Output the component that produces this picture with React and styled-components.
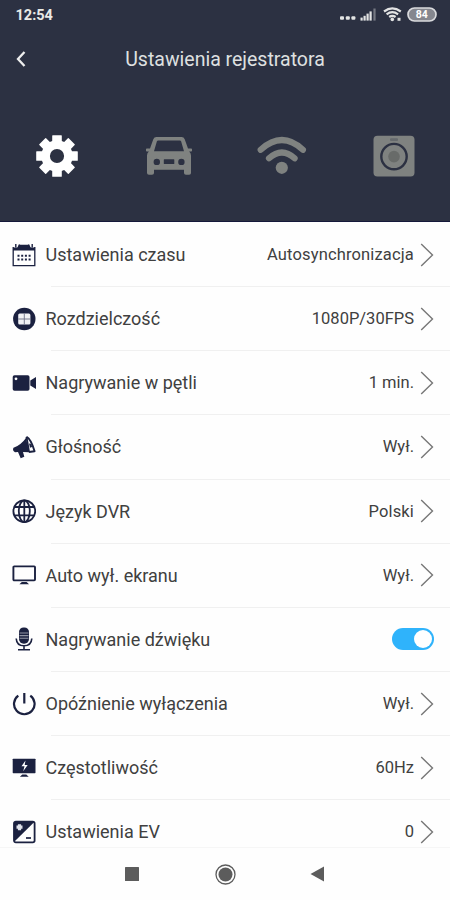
import React, { useState } from "react";
import styled, { createGlobalStyle } from "styled-components";

const Colors = {
  Navy: "#2c3142",
  Ink: "#1b2140",
  Muted: "#7f8280",
  Text: "#404040",
  Line: "#f0f0f0",
  Switch: "#2fb3fb",
  Nav: "#5c5c5c",
};

const GlobalStyle = createGlobalStyle`
  * {
    box-sizing: border-box;
  }
  body {
    margin: 0;
    background: #fefefe;
    font-family: Roboto, "Liberation Sans", sans-serif;
  }
`;

const Screen = styled.div`
  display: flex;
  flex-direction: column;
  width: 450px;
  height: 900px;
  overflow: hidden;
`;

const Header = styled.header`
  flex: none;
  height: 222px;
  background: ${Colors.Navy};
  border-bottom: 1px solid #15183a;
`;

const StatusBar = styled.div`
  display: flex;
  justify-content: space-between;
  align-items: center;
  height: 30px;
  padding: 0 13px 0 15.5px;
`;

const Clock = styled.span`
  font-size: 14.5px;
  font-weight: 700;
  color: #e9eae6;
`;

const TitleBar = styled.div`
  display: grid;
  grid-template-columns: 60px 1fr 60px;
  align-items: center;
  height: 58px;
`;

const BackButton = styled.button`
  display: flex;
  padding: 0 0 0 16px;
  border: 0;
  background: none;
`;

const Title = styled.h1`
  margin: 0;
  font-size: 19.5px;
  font-weight: 400;
  text-align: center;
  white-space: nowrap;
  color: #dfe0e0;
`;

const Tabs = styled.nav`
  display: grid;
  grid-template-columns: repeat(4, 112.5px);
  height: 136px;
`;

const Tab = styled.button`
  display: flex;
  align-items: center;
  justify-content: center;
  padding: 0 0 0 1px;
  border: 0;
  background: none;
  color: ${(props) => (props.$active ? "#ffffff" : Colors.Muted)};
`;

const List = styled.main`
  flex: 1;
  min-height: 0;
  padding-top: 0.5px;
  overflow: hidden;
`;

const StyledRow = styled.div`
  display: flex;
  height: 64.15px;
`;

const RowIcon = styled.div`
  display: flex;
  align-items: center;
  justify-content: center;
  flex: none;
  width: 24px;
  margin: 0 9.5px 0 12px;
`;

const Label = styled.span`
  display: flex;
  align-items: center;
  font-size: 18px;
  white-space: nowrap;
  color: ${Colors.Text};
`;

const Value = styled.span`
  display: flex;
  align-items: center;
  gap: 6px;
  margin-left: auto;
  padding-right: 16px;
  font-size: 16.5px;
  letter-spacing: ${(props) => props.$spacing || 0}px;
  white-space: nowrap;
  color: ${Colors.Text};
`;

const Divider = styled.div`
  height: 1px;
  margin: -0.5px 0 -0.5px 51px;
  background: ${Colors.Line};
`;

const Switch = styled.button`
  display: flex;
  justify-content: ${(props) => (props.$on ? "flex-end" : "flex-start")};
  width: 42px;
  height: 22px;
  padding: 2px;
  border: 0;
  border-radius: 11px;
  background: ${(props) => (props.$on ? Colors.Switch : "#cccccc")};
`;

const Knob = styled.span`
  width: 18px;
  height: 18px;
  border-radius: 50%;
  background: #ffffff;
`;

const NavBar = styled.footer`
  display: flex;
  flex: none;
  align-items: center;
  height: 53px;
  padding-left: 125px;
  border-top: 1px solid #f6f6f6;
  background: #fefefe;
`;

const NavButton = styled.button`
  display: flex;
  padding: 0;
  margin-right: ${(props) => props.$gap || 0}px;
  border: 0;
  background: none;
`;

function StatusIcons() {
  return (
    <svg width="100" height="20" viewBox="337 5 100 20">
      <g fill="#e3e4e4">
        <rect x="340" y="16.2" width="4" height="3.6" rx="1" />
        <rect x="345.8" y="16.2" width="4" height="3.6" rx="1" />
        <rect x="351.4" y="16.2" width="4" height="3.6" rx="1" />
        <rect x="360.5" y="17.6" width="2.2" height="3" />
        <rect x="363.5" y="15.8" width="2.2" height="4.8" />
        <rect x="366.5" y="13.6" width="2.2" height="7" />
        <rect x="369.5" y="11.4" width="2.2" height="9.2" />
        <rect x="373.4" y="8.5" width="2.2" height="12.1" opacity="0.4" />
        <circle cx="392.3" cy="19.4" r="1.8" />
        <rect x="397.5" y="17.8" width="3" height="3" />
      </g>
      <g fill="none" stroke="#e3e4e4" strokeWidth="2.2">
        <path d="M384 11.5q8.3-6.2 16.8 0" />
        <path d="M386.6 14.3q5.7-4.3 11.5 0" />
        <path d="M389.2 17q3.1-2.3 6.4 0" />
      </g>
      <rect x="408" y="8" width="28" height="13" rx="6.5" fill="#85878f" stroke="#d9dadd" strokeWidth="1.7" />
      <text x="421.8" y="18.4" textAnchor="middle" fontSize="10.5" fontWeight="700" fill="#ffffff">84</text>
    </svg>
  );
}

function GearIcon() {
  return (
    <svg width="44" height="44" viewBox="-22 -22 44 44">
      <circle r="11.4" fill="none" stroke="currentColor" strokeWidth="8.6" />
      {[0, 45, 90, 135, 180, 225, 270, 315].map((angle) => (
        <rect key={angle} x="-4.8" y="-20.8" width="9.6" height="9" rx="0.6" fill="currentColor" transform={`rotate(${angle})`} />
      ))}
    </svg>
  );
}

function CarIcon() {
  return (
    <svg width="46" height="40" viewBox="0 0 46 40">
      <path
        fill="currentColor"
        fillRule="evenodd"
        d="M10.5 1h25q2.4 0 3.2 2.3L42 12.5h3.2q.8 0 .8.8v1.5q0 .8-.8.8h-2.1q1.9 1.4 1.9 4V37q0 1.8-1.8 1.8H40q-2 0-2-1.8v-3.2H8V37q0 1.8-2 1.8H3Q1 38.800 1 37V19.600q0-2.600 1.900-4H.8q-.8 0-.8-.8v-1.500q0-.8.8-.8H4L7.300 3.300Q8.100 1 10.500 1Zm1.600 3.400q-.9 0-1.200.9L8 15.300h30L35.100 5.300q-.3-.9-1.200-.9ZM10.800 22.700a3.200 3.200 0 1 0 0 6.400 3.200 3.200 0 0 0 0-6.400Zm24.600 0a3.200 3.200 0 1 0 0 6.400 3.200 3.200 0 0 0 0-6.400ZM18.300 23.300q-.5 0-.5.5v3.600q0 .5.5.5h9.500q.5 0 .5-.5v-3.600q0-.5-.5-.5Z"
      />
    </svg>
  );
}

function WifiIcon() {
  return (
    <svg width="50" height="40" viewBox="257 136 50 40">
      <g fill="none" stroke="currentColor" strokeWidth="6.2" strokeLinecap="round">
        <path d="M260.700 149.800q21.300-19.400 42.200 0" />
        <path d="M269 158.300q12.900-11.600 25.600 0" />
      </g>
      <circle cx="281.800" cy="167.800" r="6.100" fill="currentColor" />
    </svg>
  );
}

function CameraIcon() {
  return (
    <svg width="42" height="42" viewBox="0 0 42 42">
      <rect x="0.500" y="0.800" width="41" height="40.600" rx="4" fill="currentColor" />
      <rect x="17" y="3.200" width="8" height="2.800" rx="1" fill="#666a6d" />
      <circle cx="21" cy="21.600" r="12.700" fill="#7f8280" stroke={Colors.Navy} strokeWidth="2.400" />
      <circle cx="21" cy="21.600" r="5.800" fill="#686b69" />
    </svg>
  );
}

const rowIcons = {
  calendar: (
    <>
      <path d="M1.200 4v18.700h21.600V4" fill="none" stroke={Colors.Ink} strokeWidth="1.300" />
      <path d="M7.300 1.800h9.400l2 2.600H23v3H1v-3h4.300z" fill={Colors.Ink} />
      <path d="M3.800 1v3.600M20.200 1v3.600M7.500 1.500 6.200 4.800M16.500 1.500l1.300 3.300" stroke={Colors.Ink} strokeWidth="1.400" />
      <path d="M5.500 12.700h2M9.200 12.700h2M12.900 12.700h2M16.600 12.700h2M5.500 16.500h2M9.200 16.500h2M12.900 16.500h2M16.600 16.500h2" stroke={Colors.Ink} strokeWidth="2" />
    </>
  ),
  resolution: (
    <>
      <circle cx="12.300" cy="12" r="11.200" fill={Colors.Ink} />
      <rect x="6.200" y="6.500" width="12.200" height="11" rx="1.500" fill="#f1f2f5" />
      <path d="M12.300 6.500v11M6.200 12h12.200" stroke="#6d7187" strokeWidth="0.900" />
    </>
  ),
  video: (
    <>
      <rect x="0.700" y="4.200" width="16.800" height="15.600" rx="1.800" fill={Colors.Ink} />
      <path d="M18.300 9.500 24 6v12l-5.700-3.500z" fill={Colors.Ink} />
      <circle cx="4" cy="7.800" r="1.400" fill="#fefefe" />
    </>
  ),
  megaphone: (
    <>
      <path d="M14 3 17 17.300 11 17l1.300 4.700-3.600 1.500L6 17l-3 .2q-3-1.500-1.500-4.400Q8.500 10.500 14 3Z" fill={Colors.Ink} />
      <path d="M14.500 1.800Q19 4 22.600 16.200L17 17" fill="none" stroke={Colors.Ink} strokeWidth="1.900" strokeLinejoin="round" />
      <path d="M14.500 1.800 17 17" stroke={Colors.Ink} strokeWidth="1.900" />
      <path d="M17 8.500q3 .2 3 3.500l-2 .8Z" fill={Colors.Ink} />
    </>
  ),
  globe: (
    <g fill="none" stroke={Colors.Ink} strokeWidth="1.800">
      <circle cx="12.300" cy="12.200" r="10.900" />
      <ellipse cx="12.300" cy="12.200" rx="5.500" ry="10.900" />
      <path d="M12.300 1.300v21.800M2.500 8h19.600M2.500 16.300h19.600" />
    </g>
  ),
  monitor: (
    <>
      <rect x="1.400" y="3.400" width="21.600" height="14" rx="0.800" fill="none" stroke={Colors.Ink} strokeWidth="1.900" />
      <path d="M9.800 19h4.800l2.400 2.200H7.400z" fill={Colors.Ink} />
    </>
  ),
  microphone: (
    <>
      <rect x="7" y="0.500" width="10" height="16.200" rx="4.600" fill={Colors.Ink} />
      <path d="M7.500 6h9M7.500 8.600h9M7.500 11.200h9" stroke="#9296a4" strokeWidth="1.100" />
      <path d="M4.200 11.500Q4.600 18.800 12 18.800t7.800-7.300M12 19v3.500M6 22.800h12" fill="none" stroke={Colors.Ink} strokeWidth="1.600" />
    </>
  ),
  power: (
    <path d="M6.300 3.600a10.300 10.300 0 1 0 12 0M12.300 1v10.500" fill="none" stroke={Colors.Ink} strokeWidth="2.200" />
  ),
  frequency: (
    <>
      <rect x="0.700" y="2.700" width="22.800" height="14.500" rx="0.600" fill={Colors.Ink} />
      <path d="m13.500 4.500-4 5.800h3l-1.300 5 4.500-6.400h-3z" fill="#fefefe" />
      <path d="M10.300 18.500h4l2.400 2.300H7.900z" fill={Colors.Ink} />
    </>
  ),
  exposure: (
    <>
      <rect x="2" y="1.700" width="20.600" height="20.600" rx="1.800" fill="#fefefe" />
      <path d="M2 22V2h20.300z" fill={Colors.Ink} />
      <rect x="2" y="1.700" width="20.600" height="20.600" rx="1.800" fill="none" stroke={Colors.Ink} strokeWidth="1.800" />
      <path d="M4.500 7.200h6M7.500 4.200v6" stroke="#dfe2ea" strokeWidth="3.200" />
      <path d="M14 18h5" stroke={Colors.Ink} strokeWidth="1.700" />
    </>
  ),
};

const Chevron = () => (
  <svg width="14" height="24" viewBox="0 0 14 24">
    <path d="m1.200 1 11.300 11L1.200 23" fill="none" stroke="#777777" strokeWidth="1.400" />
  </svg>
);

const settings = [
  { icon: "calendar", label: "Ustawienia czasu", value: "Autosynchronizacja", valueSpacing: 0.15 },
  { icon: "resolution", label: "Rozdzielczość", value: "1080P/30FPS" },
  { icon: "video", label: "Nagrywanie w pętli", value: "1 min." },
  { icon: "megaphone", label: "Głośność", value: "Wył." },
  { icon: "globe", label: "Język DVR", value: "Polski", valueSpacing: 0.15 },
  { icon: "monitor", label: "Auto wył. ekranu", value: "Wył." },
  { icon: "microphone", label: "Nagrywanie dźwięku", toggle: true },
  { icon: "power", label: "Opóźnienie wyłączenia", value: "Wył." },
  { icon: "frequency", label: "Częstotliwość", value: "60Hz" },
  { icon: "exposure", label: "Ustawienia EV", value: "0" },
];

function Row(props) {
  const [on, setOn] = useState(true);
  return (
    <>
      <StyledRow>
        <RowIcon>
          <svg width="24" height="24" viewBox="0 0 24 24">
            {rowIcons[props.icon]}
          </svg>
        </RowIcon>
        <Label>{props.label}</Label>
        <Value $spacing={props.valueSpacing}>
          {props.toggle ? (
            <Switch $on={on} onClick={() => setOn(!on)}>
              <Knob />
            </Switch>
          ) : (
            <>
              <span>{props.value}</span>
              <Chevron />
            </>
          )}
        </Value>
      </StyledRow>
      <Divider />
    </>
  );
}

export default function App() {
  const [tab, setTab] = useState(0);
  return (
    <Screen>
      <GlobalStyle />
      <Header>
        <StatusBar>
          <Clock>12:54</Clock>
          <StatusIcons />
        </StatusBar>
        <TitleBar>
          <BackButton>
            <svg width="11" height="16" viewBox="0 0 11 16">
              <path d="M8.500 1 2 8l6.500 7" fill="none" stroke="#eeeeee" strokeWidth="2.300" />
            </svg>
          </BackButton>
          <Title>Ustawienia rejestratora</Title>
        </TitleBar>
        <Tabs>
          {[GearIcon, CarIcon, WifiIcon, CameraIcon].map((Icon, i) => (
            <Tab key={i} $active={tab === i} onClick={() => setTab(i)}>
              <Icon />
            </Tab>
          ))}
        </Tabs>
      </Header>
      <List>
        {settings.map((item) => (
          <Row key={item.label} {...item} />
        ))}
      </List>
      <NavBar>
        <NavButton $gap={76}>
          <svg width="14" height="14">
            <rect width="14" height="14" rx="0.500" fill={Colors.Nav} />
          </svg>
        </NavButton>
        <NavButton $gap={74}>
          <svg width="21" height="21" viewBox="0 0 21 21">
            <circle cx="10.500" cy="10.500" r="9.500" fill="none" stroke={Colors.Nav} strokeWidth="1.300" />
            <circle cx="10.500" cy="10.500" r="7" fill={Colors.Nav} />
          </svg>
        </NavButton>
        <NavButton>
          <svg width="14" height="16" viewBox="0 0 14 16">
            <path d="M14 .5v15L.5 8z" fill={Colors.Nav} />
          </svg>
        </NavButton>
      </NavBar>
    </Screen>
  );
}
